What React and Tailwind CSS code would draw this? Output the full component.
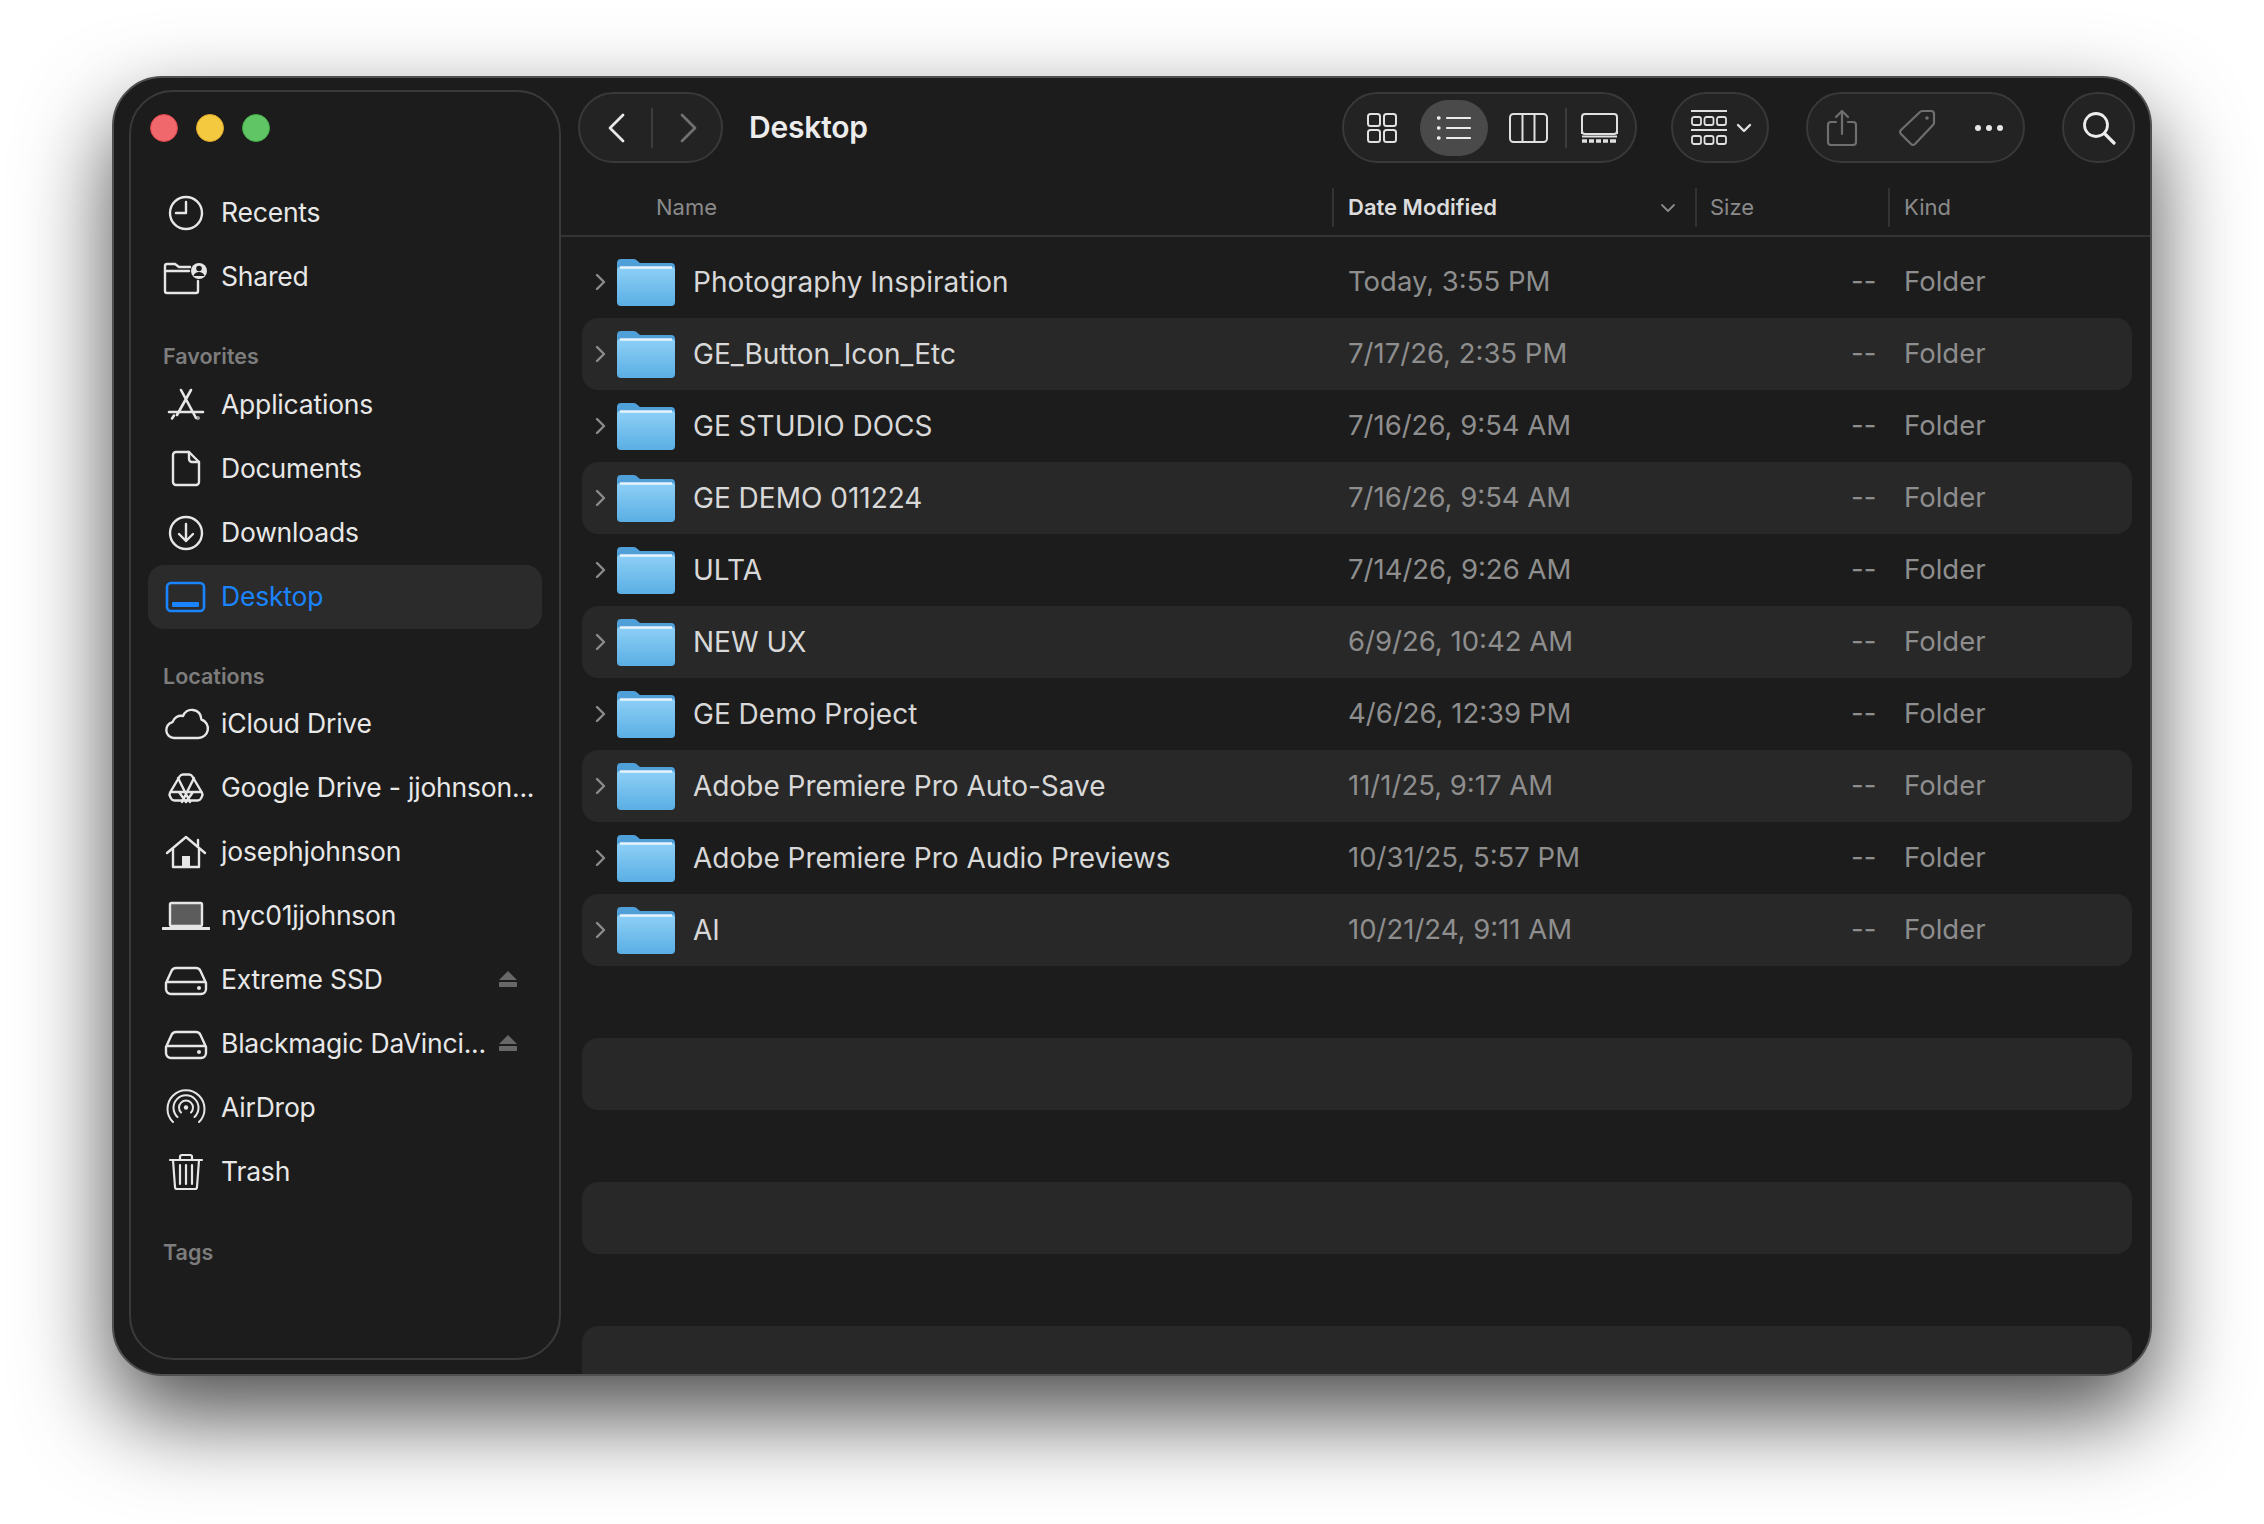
import React from 'react';

const files = [
  ['Photography Inspiration', 'Today, 3:55 PM'],
  ['GE_Button_Icon_Etc', '7/17/26, 2:35 PM'],
  ['GE STUDIO DOCS', '7/16/26, 9:54 AM'],
  ['GE DEMO 011224', '7/16/26, 9:54 AM'],
  ['ULTA', '7/14/26, 9:26 AM'],
  ['NEW UX', '6/9/26, 10:42 AM'],
  ['GE Demo Project', '4/6/26, 12:39 PM'],
  ['Adobe Premiere Pro Auto-Save', '11/1/25, 9:17 AM'],
  ['Adobe Premiere Pro Audio Previews', '10/31/25, 5:57 PM'],
  ['AI', '10/21/24, 9:11 AM'],
];

function Glyph({ children, color = '#e6e6e6', sw = 2.4 }) {
  return (
    <svg width="48" height="40" viewBox="0 0 48 40" fill="none" stroke={color} strokeWidth={sw} strokeLinecap="round" strokeLinejoin="round">
      {children}
    </svg>
  );
}

const icons = {
  recents: (
    <Glyph>
      <circle cx="24" cy="20" r="16" />
      <path d="M24 9v11H14" />
    </Glyph>
  ),
  shared: (
    <Glyph>
      <path d="M3 14V9a2 2 0 0 1 2-2h8l4 3h11" />
      <path d="M3 14h24M3 14v20a2 2 0 0 0 2 2h29a2 2 0 0 0 2-2v-10" />
      <circle cx="37" cy="14" r="8" fill="#e6e6e6" stroke="none" />
      <circle cx="37" cy="11.5" r="2.8" fill="#1c1c1c" stroke="none" />
      <path d="M31.5 19c1-3 3-4 5.500-4s4.500 1 5.500 4z" fill="#1c1c1c" stroke="none" />
    </Glyph>
  ),
  applications: (
    <Glyph sw={2.6}>
      <path d="M19 5l15 28M29 5L15 30M7 27h34M10 33.500l2-3" />
      <circle cx="36" cy="33" r="0.5" />
    </Glyph>
  ),
  documents: (
    <Glyph>
      <path d="M27 3H14a3 3 0 0 0-3 3v27a3 3 0 0 0 3 3h20a3 3 0 0 0 3-3V13z" />
      <path d="M27 3v7a3 3 0 0 0 3 3h7" />
    </Glyph>
  ),
  downloads: (
    <Glyph>
      <circle cx="24" cy="20" r="16" />
      <path d="M24 11v17M17 21l7 7 7-7" />
    </Glyph>
  ),
  desktop: (
    <Glyph color="#1a84ff" sw={2.6}>
      <rect x="5" y="6" width="37" height="28" rx="4" />
      <rect x="10" y="25" width="27" height="5" rx="1" fill="#1a84ff" stroke="none" />
    </Glyph>
  ),
  icloud: (
    <Glyph>
      <path d="M12 34a8 8 0 0 1-1.500-15.800A9 9 0 0 1 21 12c2-4.500 6-6.500 10-6 5 .6 8 4.500 8.400 9.500A9.500 9.500 0 0 1 36 34z" />
    </Glyph>
  ),
  drive: (
    <Glyph>
      <path d="M21 6.500h6a4 4 0 0 1 3.400 2l9.500 16a4 4 0 0 1 0 4l-1 2a4 4 0 0 1-3.400 2H12.500a4 4 0 0 1-3.400-2l-1-2a4 4 0 0 1 0-4l9.500-16a4 4 0 0 1 3.400-2z" />
      <path d="M9 24h30M16 10l12 24M32 10L20 34M17 24l7 10 7-10" sw="2" />
    </Glyph>
  ),
  home: (
    <Glyph>
      <path d="M5 21L24 5l19 16" />
      <path d="M36 8v6" />
      <path d="M11 17v18h26V17" />
      <rect x="20" y="24" width="8" height="11" fill="#e6e6e6" stroke="none" />
    </Glyph>
  ),
  laptop: (
    <Glyph>
      <rect x="8" y="7" width="32" height="23" rx="1.500" fill="#5c5c5c" />
      <path d="M1 32.500h46" strokeWidth="3" />
    </Glyph>
  ),
  hdd: (
    <Glyph>
      <path d="M14 8h20a5 5 0 0 1 4.500 3L44 23v6a5 5 0 0 1-5 5H9a5 5 0 0 1-5-5v-6l5.500-12A5 5 0 0 1 14 8z" />
      <path d="M5 22h38" />
      <circle cx="37" cy="28" r="2" fill="#e6e6e6" stroke="none" />
    </Glyph>
  ),
  airdrop: (
    <Glyph sw={2}>
      <path d="M11 34a18.500 18.500 0 1 1 26 0" />
      <path d="M15.500 29a12.500 12.500 0 1 1 17 0" />
      <path d="M19 24.500a7 7 0 1 1 10 0" />
      <circle cx="24" cy="19.500" r="2.200" fill="#e6e6e6" stroke="none" />
    </Glyph>
  ),
  trash: (
    <Glyph sw={2.2}>
      <path d="M8 8h32M18 8V5a2 2 0 0 1 2-2h8a2 2 0 0 1 2 2v3" />
      <path d="M11 8l2 27a2 2 0 0 0 2 2h18a2 2 0 0 0 2-2l2-27" />
      <path d="M18 13v19M24 13v19M30 13v19" />
    </Glyph>
  ),
};

function Eject() {
  return (
    <svg width="20" height="20" viewBox="0 0 20 20" fill="#686868">
      <path d="M10 1l9 9H1z" />
      <rect x="1" y="12" width="18" height="5" rx="1" />
    </svg>
  );
}

function SideRow({ icon, label, active, eject }) {
  return (
    <div className={`mx-[17px] pl-[14px] pr-[24px] h-[64px] flex items-center rounded-[16px] ${active ? 'bg-[#2b2b2b]' : ''}`}>
      <span className="w-[48px] h-[40px] shrink-0">{icons[icon]}</span>
      <span className={`ml-[11px] text-[26.5px] tracking-[-0.2px] whitespace-nowrap ${active ? 'text-[#1a84ff]' : 'text-[#e8e8e8]'}`}>{label}</span>
      {eject && <span className="ml-auto flex"><Eject /></span>}
    </div>
  );
}

function SideLabel({ children, className }) {
  return <div className={`ml-[32px] h-[28px] flex items-center text-[21.5px] font-semibold text-[#7d7d7d] ${className}`}>{children}</div>;
}

function Sidebar() {
  return (
    <aside className="ml-[15px] mt-[12px] w-[432px] h-[1270px] shrink-0 rounded-[44px] border-2 border-[#3a3a3a] pt-[22px]">
      <div className="ml-[19px] flex gap-[18px]">
        <span className="w-[28px] h-[28px] rounded-full bg-[#f0686c] border border-[#d9444a]" />
        <span className="w-[28px] h-[28px] rounded-full bg-[#f4c93f] border border-[#dba92a]" />
        <span className="w-[28px] h-[28px] rounded-full bg-[#60c565] border border-[#45ab4b]" />
      </div>
      <div className="mt-[39px]">
        <SideRow icon="recents" label="Recents" />
        <SideRow icon="shared" label="Shared" />
      </div>
      <SideLabel className="mt-[33px] mb-[3px]">Favorites</SideLabel>
      <SideRow icon="applications" label="Applications" />
      <SideRow icon="documents" label="Documents" />
      <SideRow icon="downloads" label="Downloads" />
      <SideRow icon="desktop" label="Desktop" active />
      <SideLabel className="mt-[33px] mb-[2px]">Locations</SideLabel>
      <SideRow icon="icloud" label="iCloud Drive" />
      <SideRow icon="drive" label="Google Drive - jjohnson..." />
      <SideRow icon="home" label="josephjohnson" />
      <SideRow icon="laptop" label="nyc01jjohnson" />
      <SideRow icon="hdd" label="Extreme SSD" eject />
      <SideRow icon="hdd" label="Blackmagic DaVinci..." eject />
      <SideRow icon="airdrop" label="AirDrop" />
      <SideRow icon="trash" label="Trash" />
      <SideLabel className="mt-[34px]">Tags</SideLabel>
    </aside>
  );
}

function Pill({ className, children }) {
  return <div className={`h-[71px] shrink-0 rounded-full bg-[#232323] border-2 border-[#393939] flex items-center ${className}`}>{children}</div>;
}

function Toolbar() {
  return (
    <div className="mt-[14px] pl-[17px] pr-[15px] flex items-center">
      <Pill className="w-[145px]">
        <svg className="ml-[27px]" width="18" height="30" viewBox="0 0 18 30" fill="none" stroke="#e8e8e8" strokeWidth="2.800" strokeLinecap="round" strokeLinejoin="round"><path d="M16 2L3 15l13 13" /></svg>
        <span className="ml-[26px] w-[2px] h-[40px] bg-[#3d3d3d]" />
        <svg className="ml-[27px]" width="18" height="30" viewBox="0 0 18 30" fill="none" stroke="#707070" strokeWidth="2.800" strokeLinecap="round" strokeLinejoin="round"><path d="M2 2l13 13L2 28" /></svg>
      </Pill>
      <div className="ml-[26px] text-[30px] font-semibold text-[#ececec] tracking-[-0.2px]">Desktop</div>

      <Pill className="ml-auto w-[295px] relative">
        <svg className="ml-[23px] shrink-0" width="30" height="30" viewBox="0 0 30 30" fill="none" stroke="#e0e0e0" strokeWidth="2">
          <rect x="1" y="1" width="12" height="12" rx="2.500" />
          <rect x="17" y="1" width="12" height="12" rx="2.500" />
          <rect x="1" y="17" width="12" height="12" rx="2.500" />
          <rect x="17" y="17" width="12" height="12" rx="2.500" />
        </svg>
        <div className="ml-[23px] w-[68px] h-[56px] shrink-0 rounded-full bg-[#4a4a4a] flex items-center justify-center">
          <svg width="34" height="24" viewBox="0 0 34 24" fill="none" stroke="#ececec" strokeWidth="2.200" strokeLinecap="round">
            <path d="M10 2h23M10 12h23M10 22h23" />
            <path d="M1.500 2h.5M1.500 12h.5M1.500 22h.5" strokeWidth="3.500" />
          </svg>
        </div>
        <svg className="ml-[21px] shrink-0" width="39" height="30" viewBox="0 0 39 30" fill="none" stroke="#e0e0e0" strokeWidth="2">
          <rect x="1" y="1" width="37" height="28" rx="3.500" />
          <path d="M13.500 1v28M25.500 1v28" />
        </svg>
        <span className="ml-[17px] w-[2px] h-[40px] shrink-0 bg-[#3d3d3d]" />
        <svg className="ml-[14px] shrink-0" width="37" height="30" viewBox="0 0 37 30" fill="none" stroke="#e0e0e0" strokeWidth="2">
          <rect x="1" y="1" width="35" height="20" rx="3" />
          <path d="M1 17v4M36 17v4" />
          <path d="M1 23.500h35" />
          <path d="M1 28h5M8 28h5M15 28h5M22 28h5M29 28h6" strokeWidth="3.500" />
        </svg>
      </Pill>

      <Pill className="ml-[34px] w-[98px]">
        <svg className="ml-[18px] shrink-0" width="36" height="36" viewBox="0 0 36 36" fill="none" stroke="#e0e0e0" strokeWidth="1.800">
          <path d="M0 1h36M0 20h36" />
          <rect x="1" y="7" width="9" height="8" rx="2" />
          <rect x="13.500" y="7" width="9" height="8" rx="2" />
          <rect x="26" y="7" width="9" height="8" rx="2" />
          <rect x="1" y="26" width="9" height="8" rx="2" />
          <rect x="13.500" y="26" width="9" height="8" rx="2" />
          <rect x="26" y="26" width="9" height="8" rx="2" />
        </svg>
        <svg className="ml-[9px] shrink-0" width="16" height="10" viewBox="0 0 16 10" fill="none" stroke="#e0e0e0" strokeWidth="2.400" strokeLinecap="round" strokeLinejoin="round"><path d="M2 2l6 6 6-6" /></svg>
      </Pill>

      <Pill className="ml-[37px] w-[219px]">
        <svg className="ml-[18px] shrink-0" width="32" height="38" viewBox="0 0 32 38" fill="none" stroke="#6f6f6f" strokeWidth="2.200" strokeLinecap="round" strokeLinejoin="round">
          <path d="M10 13H5a3 3 0 0 0-3 3v17a3 3 0 0 0 3 3h22a3 3 0 0 0 3-3V16a3 3 0 0 0-3-3h-5" />
          <path d="M16 25V2M10 8l6-6 6 6" />
        </svg>
        <svg className="ml-[40px] shrink-0" width="38" height="38" viewBox="0 0 38 38" fill="none" stroke="#6f6f6f" strokeWidth="2.200" strokeLinejoin="round">
          <path d="M24 2h9a3 3 0 0 1 3 3v9a3 3 0 0 1-1 2L17 35a3 3 0 0 1-4 0L3 25a3 3 0 0 1 0-4L22 3a3 3 0 0 1 2-1z" />
          <circle cx="29" cy="9" r="1.800" fill="#6f6f6f" stroke="none" />
        </svg>
        <span className="ml-[39px] flex gap-[5px] shrink-0">
          <span className="w-[6px] h-[6px] rounded-full bg-[#e6e6e6]" />
          <span className="w-[6px] h-[6px] rounded-full bg-[#e6e6e6]" />
          <span className="w-[6px] h-[6px] rounded-full bg-[#e6e6e6]" />
        </span>
      </Pill>

      <Pill className="ml-[37px] w-[73px] justify-center">
        <svg width="34" height="34" viewBox="0 0 34 34" fill="none" stroke="#ececec" strokeWidth="2.800" strokeLinecap="round">
          <circle cx="14" cy="14" r="11.500" />
          <path d="M22.500 22.500L32 32" strokeWidth="3.200" />
        </svg>
      </Pill>
    </div>
  );
}

function ColHead() {
  return (
    <div className="mt-[25px] h-[39px] flex items-center text-[22px] text-[#8a8a8a] border-b-2 border-[#333333] box-content pb-[8px]">
      <div className="w-[771px] pl-[95px]">Name</div>
      <div className="w-[363px] h-[39px] flex items-center border-l-2 border-[#333333] pl-[14px] pr-[19px]">
        <span className="font-semibold text-[#dcdcdc]">Date Modified</span>
        <svg className="ml-auto" width="16" height="10" viewBox="0 0 16 10" fill="none" stroke="#8a8a8a" strokeWidth="1.800" strokeLinecap="round" strokeLinejoin="round"><path d="M2 2l6 6 6-6" /></svg>
      </div>
      <div className="w-[193px] h-[39px] flex items-center border-l-2 border-[#333333] pl-[13px]">Size</div>
      <div className="flex-1 h-[39px] flex items-center border-l-2 border-[#333333] pl-[14px]">Kind</div>
    </div>
  );
}

function Folder() {
  return (
    <svg width="58" height="47" viewBox="0 0 58 47">
      <defs>
        <linearGradient id="folderFront" x1="0" y1="0" x2="0" y2="1">
          <stop offset="0" stopColor="#8ed0f7" />
          <stop offset="1" stopColor="#5aaee4" />
        </linearGradient>
      </defs>
      <path d="M0 4a4 4 0 0 1 4-4h13a4 4 0 0 1 3 1.500L23 4h31a4 4 0 0 1 4 4v20H0z" fill="#4f9fd8" />
      <path d="M0 11a3 3 0 0 1 3-3h52a3 3 0 0 1 3 3v32a4 4 0 0 1-4 4H4a4 4 0 0 1-4-4z" fill="url(#folderFront)" />
      <path d="M3 8.500h52" stroke="#e4f3fd" strokeWidth="2.500" />
    </svg>
  );
}

function FileRow({ file, index }) {
  return (
    <div className={`h-[72px] rounded-[16px] flex items-center shrink-0 ${index % 2 === 1 ? 'bg-[#282828]' : ''}`}>
      {file && (
        <>
          <div className="w-[766px] flex items-center">
            <svg className="ml-[13px] shrink-0" width="11" height="18" viewBox="0 0 11 18" fill="none" stroke="#8c8c8c" strokeWidth="2.400" strokeLinecap="round" strokeLinejoin="round"><path d="M2 2l7 7-7 7" /></svg>
            <span className="ml-[11px] flex shrink-0"><Folder /></span>
            <span className="ml-[18px] text-[28px] text-[#d8d8d8] whitespace-nowrap">{file[0]}</span>
          </div>
          <div className="w-[503px] text-[27.5px] text-[#8e8e8e]">{file[1]}</div>
          <div className="w-[53px] text-[27.5px] text-[#8e8e8e]">--</div>
          <div className="text-[27.5px] text-[#8e8e8e]">Folder</div>
        </>
      )}
    </div>
  );
}

export default function App() {
  const rows = Array.from({ length: 16 }, (_, i) => files[i]);
  return (
    <div className="w-[2264px] h-[1524px] bg-white pl-[112px] pt-[76px] overflow-hidden font-['Inter',sans-serif]">
      <div className="w-[2040px] h-[1300px] rounded-[50px] bg-[#1c1c1c] border-2 border-[#4f4f4f] overflow-hidden flex shadow-[0_40px_90px_rgba(0,0,0,0.7)]">
        <Sidebar />
        <main className="flex-1 min-w-0 flex flex-col">
          <Toolbar />
          <ColHead />
          <div className="pt-[9px] pl-[21px] pr-[18px] flex flex-col">
            {rows.map((f, i) => <FileRow key={i} file={f} index={i} />)}
          </div>
        </main>
      </div>
    </div>
  );
}
